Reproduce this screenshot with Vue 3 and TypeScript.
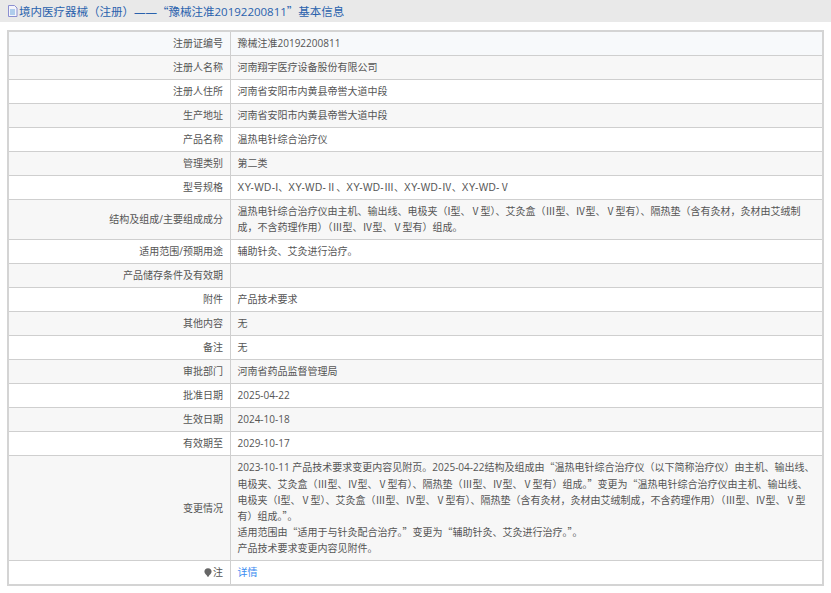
<script setup lang="ts">
interface Row { label: string; lines: string[]; link?: boolean; icon?: boolean }
interface Part { text: string; kind: string }
const rows: Row[] = [
  { label: '注册证编号', lines: ['豫械注准20192200811'] },
  { label: '注册人名称', lines: ['河南翔宇医疗设备股份有限公司'] },
  { label: '注册人住所', lines: ['河南省安阳市内黄县帝喾大道中段'] },
  { label: '生产地址', lines: ['河南省安阳市内黄县帝喾大道中段'] },
  { label: '产品名称', lines: ['温热电针综合治疗仪'] },
  { label: '管理类别', lines: ['第二类'] },
  { label: '型号规格', lines: ['XY-WD-Ⅰ、XY-WD-Ⅱ、XY-WD-Ⅲ、XY-WD-Ⅳ、XY-WD-Ⅴ'] },
  { label: '结构及组成/主要组成成分', lines: ['温热电针综合治疗仪由主机、输出线、电极夹（Ⅰ型、Ⅴ型）、艾灸盒（Ⅲ型、Ⅳ型、Ⅴ型有）、隔热垫（含有灸材，灸材由艾绒制成，不含药理作用）（Ⅲ型、Ⅳ型、Ⅴ型有）组成。'] },
  { label: '适用范围/预期用途', lines: ['辅助针灸、艾灸进行治疗。'] },
  { label: '产品储存条件及有效期', lines: [''] },
  { label: '附件', lines: ['产品技术要求'] },
  { label: '其他内容', lines: ['无'] },
  { label: '备注', lines: ['无'] },
  { label: '审批部门', lines: ['河南省药品监督管理局'] },
  { label: '批准日期', lines: ['2025-04-22'] },
  { label: '生效日期', lines: ['2024-10-18'] },
  { label: '有效期至', lines: ['2029-10-17'] },
  {
    label: '变更情况',
    lines: [
      '2023-10-11 产品技术要求变更内容见附页。2025-04-22结构及组成由“温热电针综合治疗仪（以下简称治疗仪）由主机、输出线、电极夹、艾灸盒（Ⅲ型、Ⅳ型、Ⅴ型有）、隔热垫（Ⅲ型、Ⅳ型、Ⅴ型有）组成。”变更为“温热电针综合治疗仪由主机、输出线、电极夹（Ⅰ型、Ⅴ型）、艾灸盒（Ⅲ型、Ⅳ型、Ⅴ型有）、隔热垫（含有灸材，灸材由艾绒制成，不含药理作用）（Ⅲ型、Ⅳ型、Ⅴ型有）组成。”。',
      '适用范围由“适用于与针灸配合治疗。”变更为“辅助针灸、艾灸进行治疗。”。',
      '产品技术要求变更内容见附件。',
    ],
  },
  { label: '注', lines: ['详情'], link: true, icon: true },
]

function parts(text: string): Part[] {
  return text
    .split(/(XY-WD-|[Ⅰ-Ⅴ]|[“”])/)
    .filter((t) => t !== '')
    .map((t) => {
      if (t === 'XY-WD-') return { text: t, kind: 'model' }
      if (t === 'Ⅰ') return { text: t, kind: 'one' }
      if (/[Ⅱ-Ⅴ“”]/.test(t)) return { text: t, kind: 'cjk' }
      return { text: t, kind: '' }
    })
}
const titleParts = parts('“豫械注准20192200811”')
</script>

<template>
  <div class="page">
    <h1 class="title">
      <svg class="doc" viewBox="0 0 11 12" width="11" height="12" aria-hidden="true">
        <path d="M1.500 .5h6l2.500 2.500v8.500h-8.500z" fill="#f4f4fb" stroke="#8b8fd0" />
        <path d="M3 5h5M3 7h5M3 9h5" stroke="#6aa5dc" />
      </svg>
      <span>境内医疗器械（注册）——<template v-for="(p, i) in titleParts" :key="i"><span :class="p.kind">{{ p.text }}</span></template>基本信息</span>
    </h1>
    <table class="info">
      <tbody>
        <tr v-for="row in rows" :key="row.label">
          <th>
            <svg v-if="row.icon" class="pin" viewBox="0 0 8 9" width="8" height="9" aria-hidden="true">
              <path d="M4 .3a3.600 3.600 0 0 1 3.600 3.500c0 2-2.300 3-3.100 4.900h-1C2.700 6.800.4 5.800.4 3.800A3.600 3.600 0 0 1 4 .3z" fill="#666" />
            </svg>{{ row.label }}
          </th>
          <td>
            <template v-if="row.link"><a class="link">{{ row.lines[0] }}</a></template>
            <div v-else v-for="(line, i) in row.lines" :key="i"><template v-for="(p, j) in parts(line)" :key="j"><span :class="p.kind">{{ p.text }}</span></template></div>
          </td>
        </tr>
      </tbody>
    </table>
  </div>
</template>

<style>
html, body { margin: 0; background: #fff; }
</style>

<style scoped>
.page {
  width: 831px;
  height: 593px;
  overflow: hidden;
  font-family: "Open Sans", "Noto Sans CJK SC", sans-serif;
}
.title {
  display: flex;
  align-items: center;
  gap: 1px;
  height: 22px;
  margin: 0 0 8px;
  padding-left: 7px;
  background: #e9e9e9;
  color: #2a62ad;
  font-size: 11.5px;
  font-weight: 400;
  white-space: nowrap;
}
.doc { flex: none; }
.info {
  width: 817px;
  margin-left: 7px;
  border-collapse: collapse;
  table-layout: fixed;
  font-size: 10px;
  line-height: 16.200px;
  color: #555;
  border: 2px solid #d4d4d4;
}
.info th, .info td {
  border: 1px solid #cfcfcf;
  padding: 3.400px 7px;
  font-weight: 400;
}
.info th {
  width: 207px;
  text-align: right;
}
.info td { padding-left: 6.500px; }
.info tr:nth-child(even) { background: #f7f7f7; }
.info tr:first-child { background: #f7f9fb; }
.link { color: #3b8cf0; }
.cjk, .model, .one { line-height: 1; }
.cjk { font-family: "Noto Sans CJK SC", sans-serif; }
.model {
  font-family: "Liberation Sans", sans-serif;
  letter-spacing: .35px;
}
.one { font-family: "DejaVu Sans", sans-serif; }
.pin {
  display: inline-block;
  vertical-align: -1px;
  margin-right: 1px;
}
</style>
